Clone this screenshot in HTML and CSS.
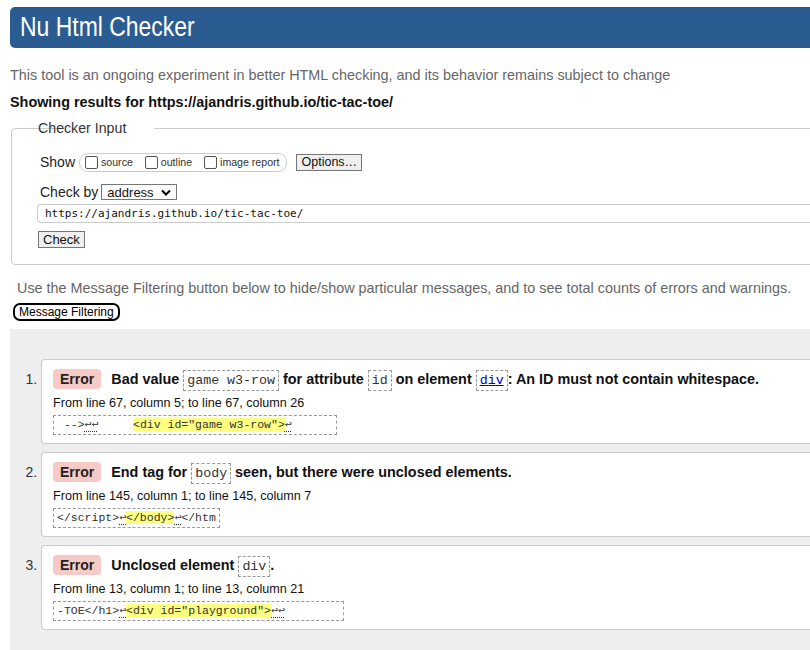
FILE: index.html
```html
<!DOCTYPE html>
<html>
<head>
<meta charset="utf-8">
<title>Nu Html Checker</title>
<link rel="stylesheet" href="styles.css">
</head>
<body>
<div class="page">
  <h1 class="title"><span class="title-text">Nu Html Checker</span></h1>
  <p class="intro">This tool is an ongoing experiment in better HTML checking, and its behavior remains subject to change</p>
  <p class="showing">Showing results for https://ajandris.github.io/tic-tac-toe/</p>

  <fieldset class="input">
    <legend>Checker Input</legend>
    <div class="row show-row">
      <span class="lbl">Show</span>
      <span class="opts">
        <label><span class="cb"></span>source</label>
        <label><span class="cb"></span>outline</label>
        <label><span class="cb"></span>image report</label>
      </span>
      <span class="btn options">Options…</span>
    </div>
    <div class="row by-row">
      <span class="lbl">Check by</span>
      <span class="select">address<svg class="chev" width="10" height="7" viewBox="0 0 10 7"><path d="M1 1.5 L5 5.5 L9 1.5" fill="none" stroke="#000" stroke-width="2"/></svg></span>
    </div>
    <div class="url">https://ajandris.github.io/tic-tac-toe/</div>
    <span class="btn check">Check</span>
  </fieldset>

  <p class="filter-note">Use the Message Filtering button below to hide/show particular messages, and to see total counts of errors and warnings.</p>
  <span class="filter-btn">Message Filtering</span>

  <div class="results">
    <ol class="msgs">
      <li>
        <div class="card">
          <p class="msg"><span class="badge">Error</span><span class="text">Bad value <code>game w3-row</code> for attribute <code>id</code> on element <code><a href="#">div</a></code>: An ID must not contain whitespace.</span></p>
          <p class="loc">From line 67, column 5; to line 67, column 26</p>
          <p class="extract"><span class="ex">&nbsp;--&gt;<u>↩↩</u>&nbsp;&nbsp;&nbsp;&nbsp;&nbsp;<mark>&lt;div id="game w3-row"&gt;</mark><u>↩</u>&nbsp;&nbsp;&nbsp;&nbsp;&nbsp;&nbsp;</span></p>
        </div>
      </li>
      <li>
        <div class="card">
          <p class="msg"><span class="badge">Error</span><span class="text">End tag for <code>body</code> seen, but there were unclosed elements.</span></p>
          <p class="loc">From line 145, column 1; to line 145, column 7</p>
          <p class="extract"><span class="ex">&lt;/script&gt;<u>↩</u><mark>&lt;/body&gt;</mark><u>↩</u>&lt;/htm</span></p>
        </div>
      </li>
      <li>
        <div class="card">
          <p class="msg"><span class="badge">Error</span><span class="text">Unclosed element <code>div</code>.</span></p>
          <p class="loc">From line 13, column 1; to line 13, column 21</p>
          <p class="extract"><span class="ex">-TOE&lt;/h1&gt;<u>↩</u><mark>&lt;div id="playground"&gt;</mark><u>↩↩</u>&nbsp;&nbsp;&nbsp;&nbsp;&nbsp;&nbsp;&nbsp;&nbsp;</span></p>
        </div>
      </li>
    </ol>
  </div>
</div>
</body>
</html>
```
FILE: styles.css
```css
html { overflow: hidden; background: #fff; }
body {
  margin: 0;
  font-family: "Liberation Sans", Arial, sans-serif;
  font-size: 14px;
  color: #222;
}
.page {
  width: 840px;
  padding: 7px 0 0 10px;
}
.title {
  margin: 0;
  height: 41px;
  background: #2b5c91;
  color: #fff;
  border-radius: 5px 0 0 5px;
  font-weight: normal;
  font-size: 27px;
  line-height: 41px;
  padding-left: 10px;
}
.title-text {
  display: inline-block;
  transform: scaleX(0.85);
  transform-origin: left center;
}
.intro {
  margin: 18px 0 0;
  color: #666;
  font-size: 14.4px;
  line-height: 18px;
}
.showing {
  margin: 9px 0 0;
  font-weight: bold;
  font-size: 14.4px;
  color: #111;
  line-height: 18px;
}
.input {
  margin: 9px 0 0 1px;
  border: 1px solid #ccc;
  border-radius: 4px 0 0 4px;
  padding: 8px 0 16px 27px;
}
.input legend {
  position: relative;
  left: -27px;
  padding: 0 1px;
  margin-left: 25px;
  color: #333;
  font-size: 14.2px;
}
.row {
  display: flex;
  align-items: center;
  margin-left: 1px;
}
.lbl { color: #222; }
.show-row { height: 20px; margin-top: 8px; }
.opts {
  display: inline-flex;
  align-items: center;
  margin-left: 4px;
  height: 17px;
  border: 1px solid #ccc;
  border-radius: 9px;
  padding: 0 6px 0 5px;
  font-size: 10.6px;
  color: #333;
}
.opts label { display: inline-flex; align-items: center; margin-right: 12px; }
.opts label:last-child { margin-right: 0; }
.cb {
  width: 11px; height: 11px;
  border: 1px solid #555;
  border-radius: 2px;
  margin-right: 3px;
  background: #fff;
}
.btn {
  display: inline-block;
  background: #efefef;
  border: 1px solid #767676;
  font-size: 13px;
  line-height: 15px;
  color: #111;
  padding: 0 5px;
}
.options { margin-left: 9px; padding: 0 4px 0 5px; font-size: 12.5px; }
.by-row { margin-top: 11px; height: 18px; }
.select {
  display: inline-flex;
  align-items: center;
  justify-content: space-between;
  margin-left: 3px;
  width: 64px;
  height: 14px;
  border: 1px solid #767676;
  padding: 0 5px 0 5px;
  font-size: 13px;
  color: #111;
}
.chev { margin-left: 6px; }
.url {
  margin: 3px 0 0 -2px;
  height: 17px;
  line-height: 17px;
  border: 1px solid #ccc;
  border-right: none;
  border-radius: 4px 0 0 4px;
  padding-left: 7px;
  font-family: "DejaVu Sans Mono", "Liberation Mono", monospace;
  font-size: 11px;
  color: #111;
}
.check { margin-top: 8px; margin-left: -1px; padding: 0 4px; }
.filter-note {
  margin: 14px 0 0 7px;
  color: #666;
  font-size: 14.4px;
  line-height: 18px;
}
.filter-btn {
  display: inline-block;
  margin: 6px 0 0 3px;
  border: 2px solid #000;
  border-radius: 7px;
  font-size: 12px;
  line-height: 14px;
  padding: 0 4px;
  color: #000;
}
.results {
  margin-top: 8px;
  background: #eee;
  padding: 30px 0 30px;
}
.msgs {
  margin: 0;
  padding-left: 31px;
  color: #333;
}
.msgs li { margin-bottom: 8px; }
.msgs li::marker { font-size: 14px; color: #333; }
.card {
  background: #fff;
  border: 1px solid #ccc;
  border-right: none;
  border-radius: 4px 0 0 4px;
  padding: 8px 0 8px 11px;
}
.msg {
  margin: 0;
  font-weight: bold;
  font-size: 14.4px;
  color: #111;
  display: flex;
  align-items: center;
  height: 22px;
}
.badge {
  display: inline-block;
  background: #f7c9c7;
  color: #222;
  font-size: 14px;
  border-radius: 4px;
  padding: 0 7px;
  line-height: 20px;
  margin-right: 10px;
}
code {
  font-family: "Liberation Mono", "DejaVu Sans Mono", monospace;
  font-weight: normal;
  font-size: 13.3px;
  border: 1px dashed #999;
  padding: 2px 3px;
  color: #333;
}
code a { color: #00c; }
.loc {
  margin: 4px 0 0;
  font-size: 12.6px;
  line-height: 18px;
  color: #111;
}
.extract { margin: 3px 0 0; }
.ex {
  display: inline-block;
  border: 1px dashed #999;
  padding: 0 3px 0 3px;
  font-family: "Liberation Mono", "DejaVu Sans Mono", monospace;
  font-size: 11.5px;
  line-height: 18px;
  color: #333;
}
.ex u { text-decoration: underline dotted; text-underline-offset: 3px; }
mark { background: #ffff80; color: #333; }
```
